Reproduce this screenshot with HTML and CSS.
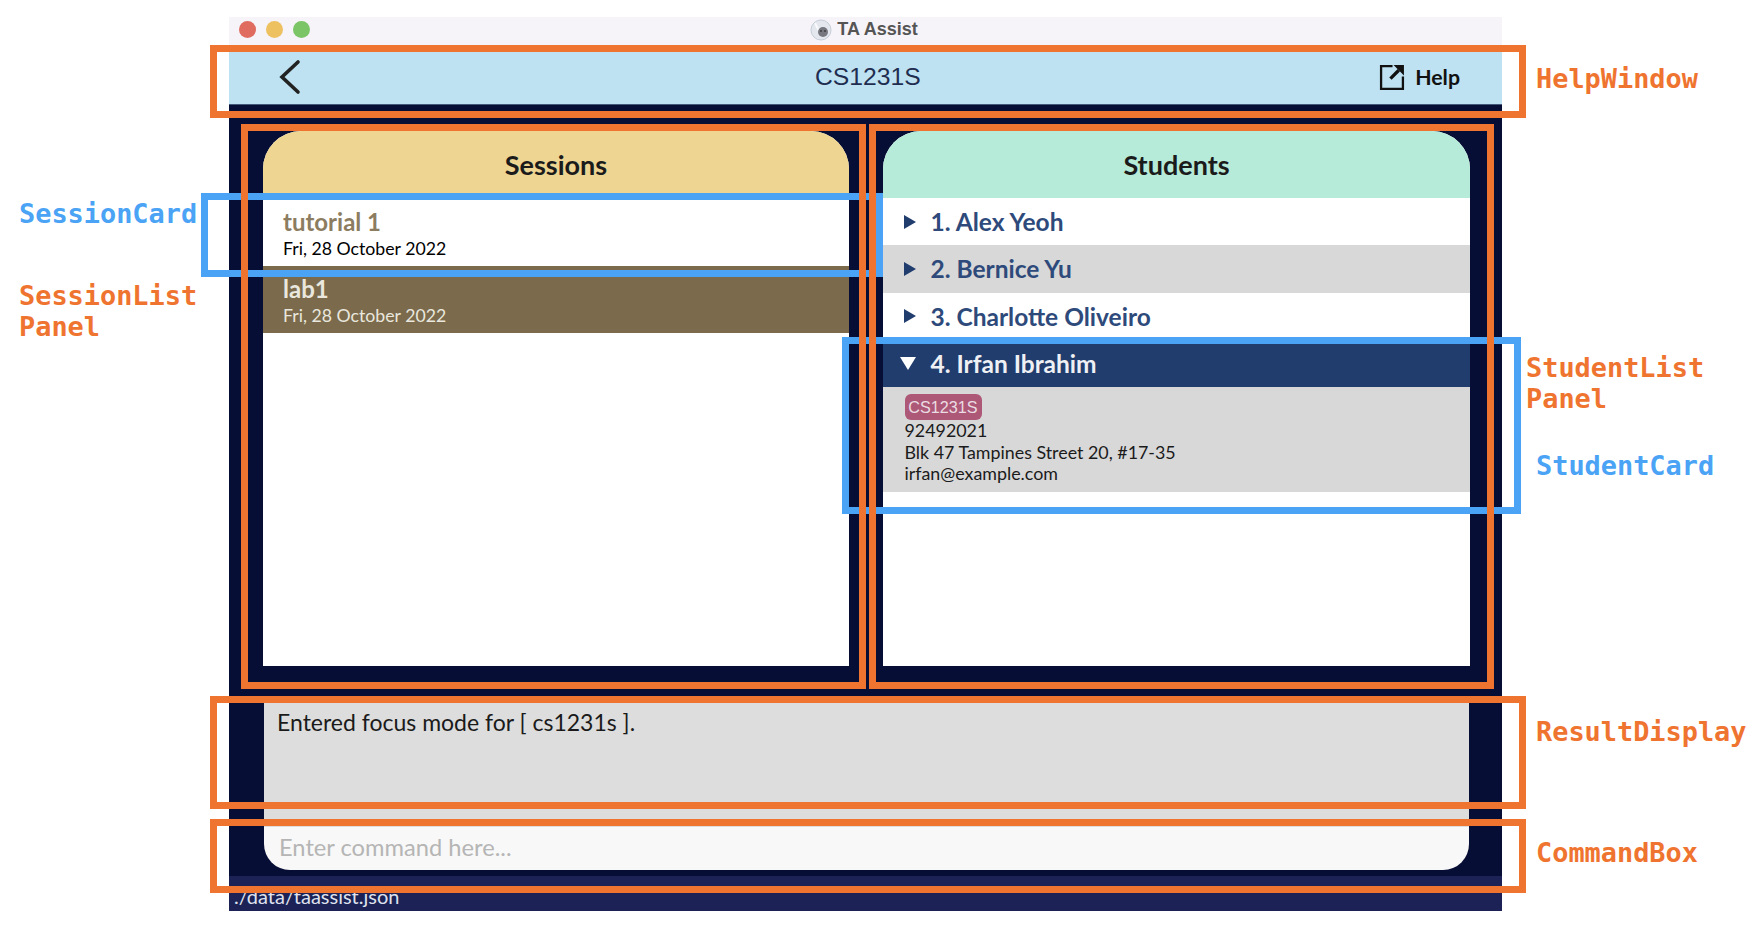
FILE: index.html
```html
<!DOCTYPE html>
<html lang="en">
<head>
<meta charset="utf-8">
<title>TA Assist</title>
<link rel="stylesheet" href="styles.css">
</head>
<body>
<div class="page">
  <div class="window">
    <div class="titlebar">
      <div class="lights">
        <span class="light red"></span>
        <span class="light yellow"></span>
        <span class="light green"></span>
      </div>
      <div class="title">
        <svg class="app-icon" viewBox="0 0 22 22" aria-hidden="true">
          <circle cx="11" cy="11" r="10" fill="#e4e8ee" stroke="#c4ced8"/>
          <path d="M5 4 L9 12" stroke="#f8fafc" stroke-width="2"/>
          <circle cx="13" cy="13" r="5" fill="#77787f"/>
          <circle cx="11" cy="12" r="1" fill="#3c3c40"/>
          <circle cx="15" cy="12" r="1" fill="#3c3c40"/>
        </svg>
        <span>TA Assist</span>
      </div>
    </div>
    <header class="appbar">
      <svg class="back" viewBox="0 0 22 36" aria-hidden="true">
        <path d="M19 3 L3 18 L19 33" fill="none" stroke="#222" stroke-width="3.6" stroke-linecap="round" stroke-linejoin="miter"/>
      </svg>
      <div class="module">CS1231S</div>
      <div class="help">
        <svg class="help-icon" viewBox="0 0 25 25" aria-hidden="true">
          <path d="M13 2 H2 V24 H23 V12" fill="none" stroke="#111" stroke-width="2.2"/>
          <path d="M11 14 L19 6" stroke="#111" stroke-width="3.2"/>
          <path d="M14 1 H24 V11 Z" fill="#111"/>
        </svg>
        <span>Help</span>
      </div>
    </header>
    <main class="panels">
      <section class="panel">
        <h2 class="panel-head sessions-head">Sessions</h2>
        <div class="session-card">
          <div class="session-name name-selected">tutorial 1</div>
          <div class="session-date">Fri, 28 October 2022</div>
        </div>
        <div class="session-card session-active">
          <div class="session-name">lab1</div>
          <div class="session-date">Fri, 28 October 2022</div>
        </div>
      </section>
      <section class="panel">
        <h2 class="panel-head students-head">Students</h2>
        <div class="student-row"><span class="tri-right"></span><span>1. Alex Yeoh</span></div>
        <div class="student-row row-alt"><span class="tri-right"></span><span>2. Bernice Yu</span></div>
        <div class="student-row"><span class="tri-right"></span><span>3. Charlotte Oliveiro</span></div>
        <div class="student-row row-open"><span class="tri-down"></span><span>4. Irfan Ibrahim</span></div>
        <div class="student-details">
          <span class="tag">CS1231S</span>
          <div class="detail">92492021</div>
          <div class="detail">Blk 47 Tampines Street 20, #17-35</div>
          <div class="detail">irfan@example.com</div>
        </div>
      </section>
    </main>
    <div class="console">
      <div class="result">Entered focus mode for [ cs1231s ].</div>
      <div class="command">Enter command here...</div>
    </div>
    <footer class="status">./data/taassist.json</footer>
  </div>

  <div class="box blue box-session-card"></div>
  <div class="box blue box-student-card"></div>
  <div class="box orange box-help"></div>
  <div class="box orange box-sessions"></div>
  <div class="box orange box-students"></div>
  <div class="box orange box-result"></div>
  <div class="box orange box-command"></div>

  <div class="label orange-text label-help">HelpWindow</div>
  <div class="label blue-text label-session-card">SessionCard</div>
  <div class="label orange-text label-session-list">SessionList<br>Panel</div>
  <div class="label orange-text label-student-list">StudentList<br>Panel</div>
  <div class="label blue-text label-student-card">StudentCard</div>
  <div class="label orange-text label-result">ResultDisplay</div>
  <div class="label orange-text label-command">CommandBox</div>
</div>
</body>
</html>
```

FILE: styles.css
```css
* { box-sizing: border-box; }
html, body { margin: 0; padding: 0; background: #fff; }
body { font-family: "Lato", "Liberation Sans", sans-serif; overflow: hidden; }

.page {
  position: relative;
  width: 1758px;
  height: 936px;
  padding: 17px 256px 25px 229px;
}

.window {
  height: 894px;
  display: flex;
  flex-direction: column;
  background: #070e35;
}

.titlebar {
  height: 35px;
  flex: none;
  display: flex;
  align-items: center;
  justify-content: center;
  position: relative;
  background: #f6f3f9;
}
.lights {
  position: absolute;
  left: 10px;
  top: 4px;
  display: flex;
  gap: 10px;
}
.light { width: 17px; height: 17px; border-radius: 50%; }
.red { background: #e06c60; }
.yellow { background: #edc060; }
.green { background: #7bc566; }
.title {
  display: flex;
  align-items: center;
  gap: 5px;
  margin-top: -10px;
  margin-left: -3px;
  font: bold 18px "Liberation Sans", sans-serif;
  color: #555;
}
.app-icon { width: 22px; height: 22px; }

.appbar {
  height: 53px;
  flex: none;
  display: flex;
  align-items: center;
  justify-content: space-between;
  padding: 0 42px 3px 50px;
  position: relative;
  background: #bee2f1;
  border-bottom: 1px solid #44587a;
}
.back { width: 22px; height: 36px; }
.module {
  position: absolute;
  left: 586px;
  top: 11px;
  font: 24.7px "Liberation Sans", sans-serif;
  color: #1f2d50;
}
.help {
  display: flex;
  align-items: center;
  gap: 10px;
  font-weight: 700;
  font-size: 21.3px;
  color: #111;
}
.help-icon { width: 26px; height: 26px; }

.panels {
  height: 535px;
  flex: none;
  margin-top: 26px;
  padding: 0 32px 0 34px;
  display: grid;
  grid-template-columns: 586px 587px;
  column-gap: 34px;
}
.panel {
  display: flex;
  flex-direction: column;
  background: #fff;
  border-radius: 38px 38px 0 0;
  overflow: hidden;
}
.panel-head {
  margin: 0;
  height: 67px;
  flex: none;
  padding-top: 16px;
  text-align: center;
  font-size: 27px;
  line-height: 36px;
  font-weight: 700;
  color: #1b1b1b;
}
.sessions-head { height: 68px; background: #eed592; }
.students-head { background: #b7ebd9; }

.session-card { height: 67px; padding: 8px 20px 0; background: #fff; }
.session-active { background: #7b6b4c; color: #e9e7de; }
.session-name { font-size: 24px; line-height: 30px; font-weight: 700; }
.name-selected { color: #8c7d61; }
.session-date { font-size: 17.7px; line-height: 23px; }

.student-row {
  height: 47.25px;
  display: flex;
  align-items: center;
  gap: 15px;
  padding-left: 20.5px;
  font-size: 24.5px;
  font-weight: 700;
  color: #2e4a7b;
  background: #fff;
}
.row-alt { background: #d8d8d8; }
.row-open { background: #213d6e; color: #eef0f4; padding-left: 16.5px; }
.tri-right {
  width: 0; height: 0;
  border-left: 12.5px solid #213d6e;
  border-top: 7.5px solid transparent;
  border-bottom: 7.5px solid transparent;
}
.tri-down {
  width: 0; height: 0;
  border-top: 13px solid #fff;
  border-left: 8.5px solid transparent;
  border-right: 8.5px solid transparent;
}
.student-details {
  height: 105px;
  padding: 7px 21.5px 0;
  background: #d8d8d8;
  color: #1b1b1b;
}
.tag {
  display: block;
  width: 77px;
  height: 26px;
  border-radius: 6px;
  background: #ae5878;
  color: #eadde3;
  font: 16.2px/26px "Liberation Sans", sans-serif;
  text-align: center;
}
.detail { font-size: 17.85px; line-height: 21.7px; }

.console {
  margin: 34px 33.5px 0 35px;
  flex: none;
}
.result {
  height: 127px;
  padding: 7px 13px;
  font-size: 23px;
  line-height: 30px;
  color: #1a1a1a;
  background: #dddddd;
}
.command {
  height: 43px;
  padding: 5px 15px 0;
  font-size: 23.7px;
  line-height: 30px;
  color: #b5b5b5;
  background: #f8f8f8;
  border-radius: 0 0 26px 26px;
}
.status {
  margin-top: 6px;
  flex: 1;
  padding: 6px 5px 0;
  font-size: 20px;
  line-height: 28px;
  color: #dfe2ee;
  background: #1c2255;
}

.box { position: absolute; border-style: solid; border-width: 7px; }
.orange { border-color: #ef7430; }
.blue { border-color: #4aa3f5; }
.box-help { left: 210px; top: 45px; width: 1316px; height: 73px; }
.box-sessions { left: 241px; top: 124px; width: 625px; height: 565px; }
.box-students { left: 869px; top: 124px; width: 625px; height: 565px; }
.box-result { left: 210px; top: 696px; width: 1316px; height: 113px; }
.box-command { left: 210px; top: 819px; width: 1316px; height: 74px; }
.box-session-card { left: 201px; top: 193px; width: 682px; height: 84px; }
.box-student-card { left: 842px; top: 337px; width: 679px; height: 177px; }

.label {
  position: absolute;
  font: bold 26.9px/31px "DejaVu Sans Mono", monospace;
}
.orange-text { color: #ef7430; }
.blue-text { color: #4aa3f5; }
.label-help { left: 1536px; top: 63px; }
.label-session-card { left: 19px; top: 198px; }
.label-session-list { left: 19px; top: 280px; }
.label-student-list { left: 1526px; top: 352px; }
.label-student-card { left: 1536px; top: 450px; }
.label-result { left: 1536px; top: 716px; }
.label-command { left: 1536px; top: 837px; }
```
